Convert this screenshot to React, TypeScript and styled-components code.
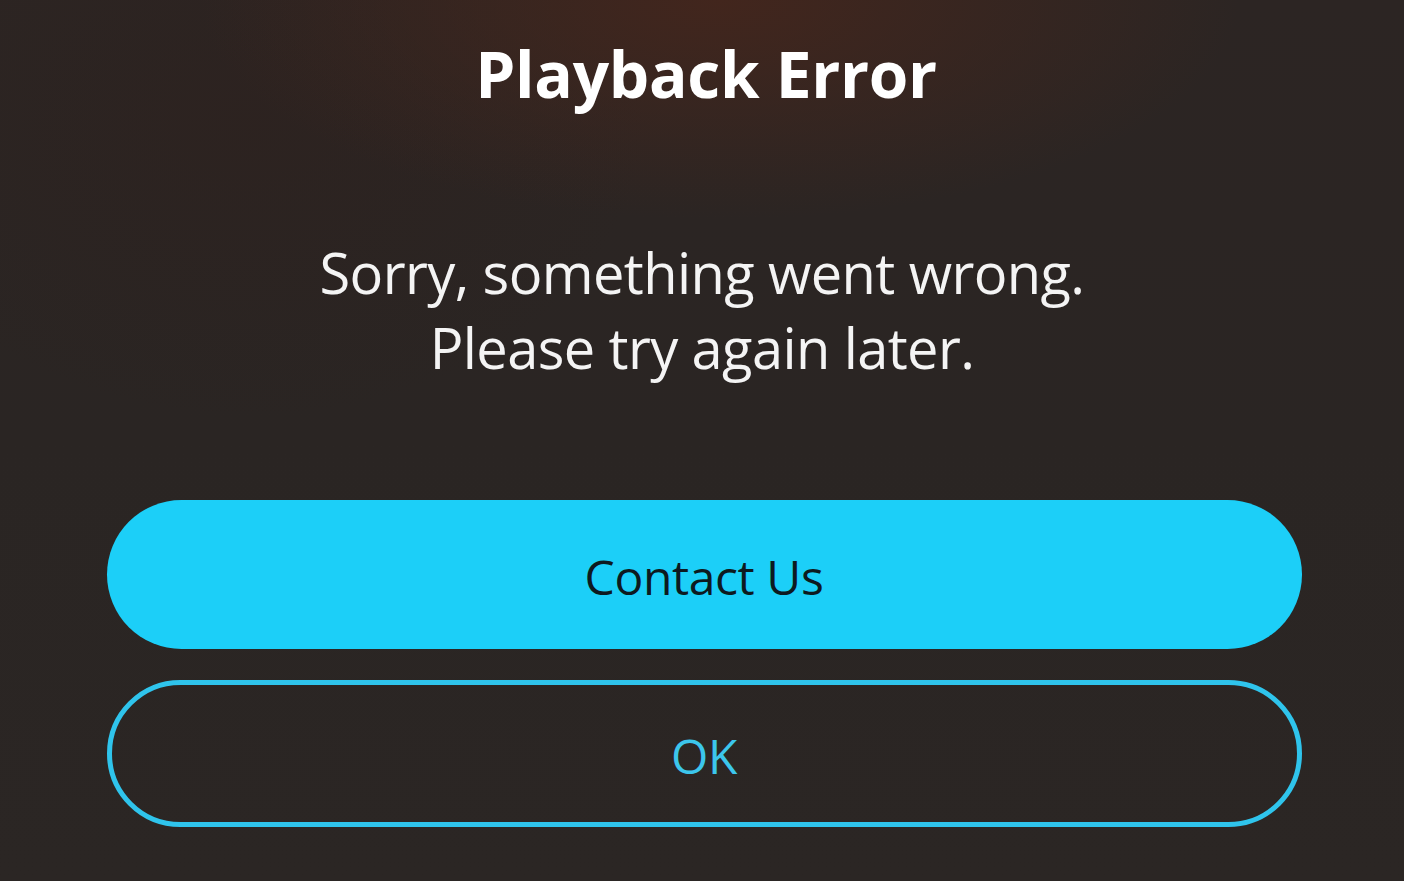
import React from "react";
import styled, { createGlobalStyle } from "styled-components";

const GlobalStyle = createGlobalStyle`
  html, body {
    margin: 0;
    padding: 0;
    height: 100%;
  }
  body {
    font-family: "Open Sans", "Noto Sans", sans-serif;
    background: #2a2522;
  }
`;

const Screen = styled.div`
  width: 1404px;
  height: 881px;
  overflow: hidden;
  display: flex;
  flex-direction: column;
  align-items: center;
  background:
    radial-gradient(ellipse 520px 220px at 720px 0px, rgba(70, 38, 28, 0.85), rgba(70, 38, 28, 0) 100%),
    radial-gradient(ellipse 400px 300px at 250px 120px, rgba(45, 33, 30, 0.6), rgba(45, 33, 30, 0) 100%),
    linear-gradient(180deg, #2c2523 0%, #2a2523 50%, #2b2624 100%);
`;

const Title = styled.h1`
  margin: 0 0 0 8px;
  padding-top: 32px;
  font-size: 64px;
  line-height: 84px;
  font-weight: 700;
  color: #ffffff;
  letter-spacing: -0.3px;
`;

const Message = styled.p`
  margin: 0;
  margin-top: 119px;
  text-align: center;
  font-size: 56px;
  line-height: 75px;
  font-weight: 400;
  color: #f4f4f4;
  letter-spacing: -0.6px;
`;

const Actions = styled.div`
  margin-top: 115px;
  margin-left: 4px;
  width: 1195px;
  display: flex;
  flex-direction: column;
  gap: 31px;
`;

const PillButton = styled.button<{ $variant: "filled" | "outline" }>`
  box-sizing: border-box;
  width: 100%;
  height: ${(p) => (p.$variant === "filled" ? "149px" : "147px")};
  border-radius: 75px;
  font-family: "Open Sans", "Noto Sans", sans-serif;
  font-size: 48px;
  font-weight: 400;
  letter-spacing: -0.4px;
  cursor: pointer;
  display: flex;
  align-items: center;
  justify-content: center;
  padding: 3px 0 0;
  background: ${(p) => (p.$variant === "filled" ? "#1ccff8" : "transparent")};
  color: ${(p) => (p.$variant === "filled" ? "#0d1a20" : "#3cc6ec")};
  border: ${(p) => (p.$variant === "filled" ? "none" : "5px solid #2fc4ec")};
`;

export default function App() {
  return (
    <>
      <GlobalStyle />
      <Screen>
        <Title>Playback Error</Title>
        <Message>
          Sorry, something went wrong.
          <br />
          Please try again later.
        </Message>
        <Actions>
          <PillButton $variant="filled">Contact Us</PillButton>
          <PillButton $variant="outline">OK</PillButton>
        </Actions>
      </Screen>
    </>
  );
}
